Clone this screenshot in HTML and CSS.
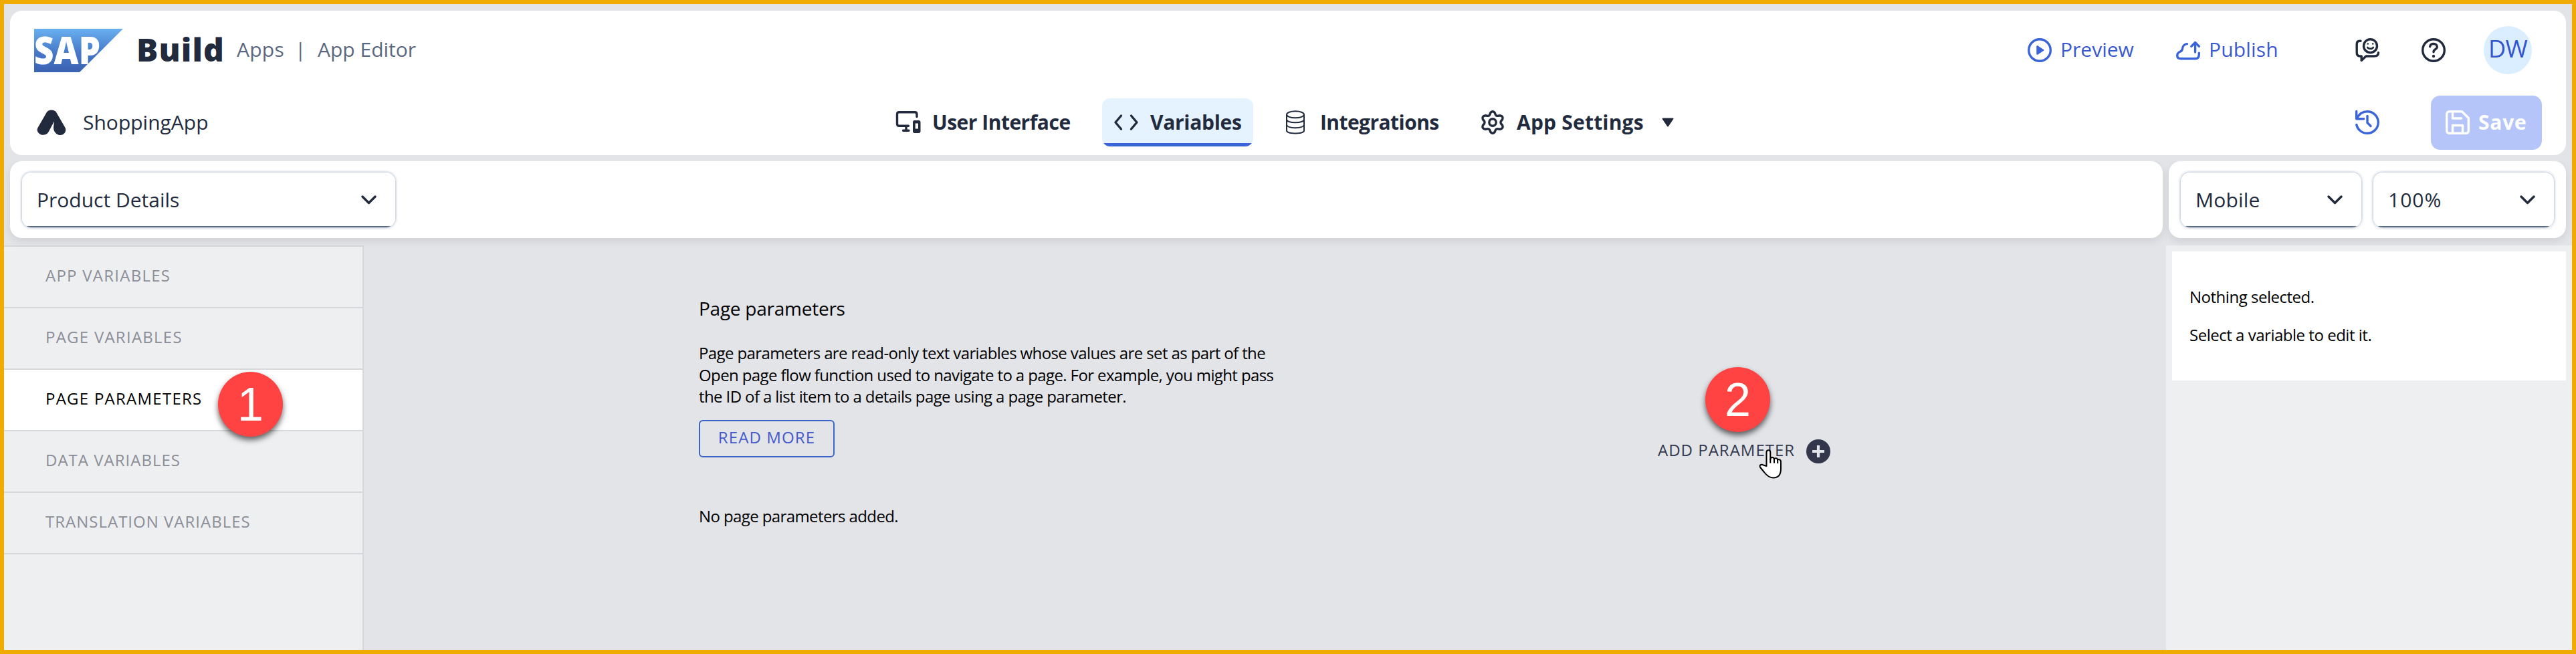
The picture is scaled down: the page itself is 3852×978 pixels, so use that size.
FILE: index.html
```html
<!DOCTYPE html>
<html lang="en">
<head>
<meta charset="utf-8">
<title>App Editor</title>
<link rel="stylesheet" href="styles.css">
</head>
<body>
<div class="app">
  <header class="header">
    <div class="header-row">
      <svg class="logo" width="133" height="65" viewBox="0 0 133 65">
        <defs><linearGradient id="sap" x1="0" y1="0" x2="0" y2="1"><stop offset="0" stop-color="#69b0f0"/><stop offset=".55" stop-color="#4679c8"/><stop offset="1" stop-color="#3d62b2"/></linearGradient></defs>
        <path d="M0 0h133L68 65H0z" fill="url(#sap)"/>
        <text class="logo-text" x="0" y="53" textLength="99" lengthAdjust="spacingAndGlyphs">SAP</text>
      </svg>
      <span class="build">Build</span>
      <span class="crumb crumb-apps">Apps</span>
      <span class="crumb crumb-sep">|</span>
      <span class="crumb crumb-editor">App Editor</span>
      <div class="actions">
        <svg width="36" height="36" viewBox="0 0 36 36" class="blue"><circle cx="18" cy="18" r="16.3" class="ln"/><path d="M14.5 12.4v11.2l8.6-5.6z" fill="currentColor" stroke="currentColor" stroke-width="2.5" stroke-linejoin="round"/></svg>
        <span class="action preview">Preview</span>
        <svg width="36" height="36" viewBox="0 0 36 36" class="blue"><path class="ln" d="M16.5 8.6C13 9 9.8 11.500 9.400 16c-.3 3-1.400 3.300-3.400 4.300C3.500 21.500 1.700 23 1.700 26c0 3.500 2.500 4.800 5.500 4.800H29c3.500 0 5.300-2 5.300-6.500v-2M28.600 21V7.500M22.800 12.400 28.600 6.500l5.800 5.900"/></svg>
        <span class="action publish">Publish</span>
        <svg class="feedback" width="36" height="36" viewBox="0 0 36 36"><path class="ln" d="M8 4.300H6.500C3.500 4.300 2.200 6 2.200 9v12.500c0 4 1.500 5.500 4.800 5.500h2.200v6.500L16 27h12.500c4 0 6-1.300 6-5.300"/><circle cx="22.500" cy="11.700" r="10" class="ln"/><circle cx="18.800" cy="8.500" r="1.300" fill="currentColor"/><circle cx="26.200" cy="8.500" r="1.300" fill="currentColor"/><path class="ln smile" d="M18.200 13.800c1.500 2.800 7.200 2.800 8.600 0"/></svg>
        <svg class="help" width="36" height="36" viewBox="0 0 36 36"><circle cx="18" cy="18" r="16.300" class="ln"/><path class="ln" d="M12.700 12.800c.2-6 10.600-5.600 10.600.2 0 4.300-5.300 3.300-5.300 7.700"/><circle cx="18" cy="27" r="2.200" fill="currentColor"/></svg>
        <div class="avatar"><span>DW</span></div>
      </div>
    </div>
    <div class="header-row row-nav">
      <svg class="app-mark" width="44" height="38" viewBox="0 0 44 38"><path d="M14.500 4.500C17-1 27-1 29.500 4.500L42.500 27c3 6-3 12-8.500 11-5.500-1-9-6-9-11l1-9.500-8.500 16c-3 5-10 5.500-13.500 2.500C.5 33 0 30 1.500 27z" fill="currentColor"/></svg>
      <span class="app-name">ShoppingApp</span>
      <nav class="tabs">
        <div class="tab tab-ui">
          <svg width="36" height="36" viewBox="0 0 36 36"><path class="ln" d="M31 9.500V6c0-2-1-3.300-3-3.300H4.500c-2 0-3 1.300-3 3.300v14c0 2 1 3.300 3 3.300H18.500M15 24v6M10.500 30.300h8.500"/><path d="M27.500 15h6.500c1.500 0 2.500 1 2.500 2.500v14c0 1.500-1 2.500-2.500 2.500h-6.500c-1.500 0-2.500-1-2.500-2.500v-14c0-1.500 1-2.500 2.500-2.500zm1.200 4.500v8h4.300v-8z" fill="currentColor" fill-rule="evenodd"/></svg>
          <span>User Interface</span>
        </div>
        <div class="tab tab-var tab-on">
          <svg width="36" height="36" viewBox="0 0 36 36"><path class="ln" d="M10.500 8 2 18l8.500 10M25.500 8 34 18l-8.500 10"/></svg>
          <span>Variables</span>
        </div>
        <div class="tab tab-int">
          <svg width="36" height="36" viewBox="0 0 36 36"><g fill="none" stroke="currentColor" stroke-width="2"><ellipse cx="17" cy="6.300" rx="13" ry="5"/><path d="M4 6.300v24c0 5.500 26 5.500 26 0v-24M4 14.200c2 5.500 24 5.500 26 0M4 22c2 5.500 24 5.500 26 0"/></g></svg>
          <span>Integrations</span>
        </div>
        <div class="tab tab-set">
          <svg width="36" height="36" viewBox="-18 -18 36 36"><path class="ln" d="M-3.100-14.500Q0-18 3.100-14.500L4.500-11.100Q5.800-9.300 7.900-9.700L11.500-10.200Q16.300-9 14.700-4.600L12.300-1.600Q11.600 0 12.300 1.600L14.700 4.600Q16.300 9 11.500 10.200L7.900 9.700Q5.800 9.300 4.500 11.100L3.100 14.500Q0 18-3.100 14.500L-4.500 11.100Q-5.800 9.300-7.900 9.700L-11.500 10.200Q-16.300 9-14.700 4.600L-12.300 1.600Q-11.600 0-12.300-1.600L-14.700-4.600Q-16.300-9-11.500-10.200L-7.900-9.700Q-5.800-9.300-4.500-11.100Z"/><circle r="5.200" class="ln"/></svg>
          <span>App Settings</span>
          <svg class="tri" width="18" height="14" viewBox="0 0 18 14"><path d="M1.500 1.500h15L9 12.500z" fill="currentColor" stroke="currentColor" stroke-width="2" stroke-linejoin="round"/></svg>
        </div>
      </nav>
      <div class="save-zone">
        <svg class="blue" width="36" height="36" viewBox="0 0 36 36"><path class="ln" d="M1.700 1.500v11.200h11M2.500 12C5.500 5.500 11 1.700 18 1.700c9 0 16.300 7.300 16.300 16.300S27 34.300 18 34.300C10 34.300 3.500 29 1.800 21.500M18 8.500v10l5 5"/></svg>
        <button class="save"><svg width="36" height="36" viewBox="0 0 36 36"><path class="ln" d="M6 1.700h18.500l9.800 9.800V30c0 2.800-1.500 4.300-4.300 4.300H6c-2.800 0-4.300-1.500-4.300-4.300V6c0-2.800 1.500-4.300 4.300-4.300zM10.500 2v10h13M10.500 34V22.500h15V34"/></svg><span>Save</span></button>
      </div>
    </div>
  </header>

  <div class="toolbars">
    <div class="toolbar toolbar-main">
      <div class="select select-page"><span>Product Details</span><svg width="23" height="14" viewBox="0 0 23 14"><path d="M2 2l9.500 9.500L21 2"/></svg></div>
    </div>
    <div class="toolbar toolbar-side">
      <div class="select"><span>Mobile</span><svg width="23" height="14" viewBox="0 0 23 14"><path d="M2 2l9.500 9.500L21 2"/></svg></div>
      <div class="select select-zoom"><span>100%</span><svg width="23" height="14" viewBox="0 0 23 14"><path d="M2 2l9.500 9.500L21 2"/></svg></div>
    </div>
  </div>

  <div class="body">
    <aside class="sidebar">
      <div class="item"><span>APP VARIABLES</span></div>
      <div class="item"><span>PAGE VARIABLES</span></div>
      <div class="item item-on"><span>PAGE PARAMETERS</span><b class="badge badge-1">1</b></div>
      <div class="item item-tight"><span>DATA VARIABLES</span></div>
      <div class="item item-tight"><span>TRANSLATION VARIABLES</span></div>
    </aside>
    <main class="main">
      <div class="info">
        <h1 class="title">Page parameters</h1>
        <p class="text">Page parameters are read-only text variables whose values are set as part of the<br>Open page flow function used to navigate to a page. For example, you might pass<br>the ID of a list item to a details page using a page parameter.</p>
        <button class="more"><span>READ MORE</span></button>
        <p class="empty">No page parameters added.</p>
      </div>
      <div class="add">
        <span class="add-label">ADD PARAMETER</span>
        <svg width="36" height="36" viewBox="0 0 36 36"><circle cx="18" cy="18" r="18" fill="#32374b"/><path d="M18 9v18M9 18h18" stroke="#e3e4e8" stroke-width="4.200"/></svg>
        <b class="badge badge-2">2</b>
        <svg class="cursor" width="36" height="46" viewBox="0 0 36 46"><path d="M11.500 25V4.200a2.900 2.900 0 0 1 5.800 0V15q0-3 2.700-3t3 3q0-2 2.600-1.800t2.600 3q0-1.500 2.400-1t2.400 3.500V29c0 9-4 13.500-11.500 13.500C15 42.500 11 38 8 34L2.300 27c-2.300-3 1.200-5.500 4.500-3.500z" fill="#fff" stroke="#000" stroke-width="2" stroke-linejoin="round"/><path d="M17.300 14v6.500M23 14.500v6M28.200 16v5" stroke="#000" stroke-width="2"/></svg>
      </div>
    </main>
    <aside class="panel">
      <div class="card"><p class="card-line">Nothing selected.</p><p class="card-line">Select a variable to edit it.</p></div>
    </aside>
  </div>
</div>
</body>
</html>
```
FILE: styles.css
```css
* { box-sizing: border-box; }
body { margin: 0; font-family: "Open Sans", "Noto Sans", sans-serif; color: #222b3d; }
h1, p { margin: 0; font-weight: 400; white-space: nowrap; }
button { font: inherit; letter-spacing: inherit; }
span, b { white-space: nowrap; }
svg { flex: none; display: block; overflow: visible; }
.app { height: 978px; border: 6px solid #f0ab00; background: #e3e4e8; padding-top: 10px; display: flex; flex-direction: column; overflow: hidden; }
.ln { fill: none; stroke: currentColor; stroke-width: 3.4; stroke-linecap: round; stroke-linejoin: round; }
.smile { stroke-width: 2.6; }
.blue { color: #3b64d9; }

.header { margin: 0 9px; height: 216px; border-radius: 18px; background: #fff; flex: none; }
.header-row { height: 118px; padding-left: 36px; display: flex; align-items: center; }
.row-nav { height: 98px; padding-left: 40px; }
.logo-text { font: 800 57px "Open Sans", sans-serif; fill: #fff; }
.build { margin: -3px 0 0 20px; width: 150px; font-size: 48px; font-weight: 800; letter-spacing: 1.1px; }
.crumb { margin-top: -3px; font-size: 30px; color: #5b6880; }
.crumb-apps { width: 87px; letter-spacing: .25px; }
.crumb-sep { width: 34px; }
.actions { margin-left: auto; padding-right: 51px; display: flex; align-items: center; }
.action { font-size: 30px; color: #3b59cf; margin: -3px 0 0 13px; }
.preview { width: 173px; }
.publish { width: 219px; letter-spacing: .15px; }
.help { margin: 0 57px 0 63px; }
.avatar { width: 72px; height: 72px; border-radius: 50%; background: #dbeeff; color: #3457cf; font-size: 36px; letter-spacing: -.7px; display: flex; align-items: center; justify-content: center; padding-bottom: 5px; }
.app-name { margin: -2px 0 0 25px; width: 1198px; font-size: 30px; }

.tabs { display: flex; gap: 28px; }
.tab { height: 72px; padding: 0 14px 0 18px; display: flex; align-items: center; gap: 18px; border-radius: 12px; font-size: 30px; font-weight: 700; }
.tab span { margin-top: -2px; }
.tab-ui { width: 298px; letter-spacing: -.5px; }
.tab-var { width: 226px; letter-spacing: -.3px; }
.tab-int { width: 266px; letter-spacing: -.57px; }
.tab-set { letter-spacing: .2px; }
.tri { margin-left: 9px; }
.tab-on { background: linear-gradient(#e5f2ff 67px, #3b64d9 67px); }
.save-zone { margin-left: auto; padding-right: 36px; display: flex; align-items: center; gap: 77px; }
.save { width: 166px; height: 81px; padding: 0 0 0 22px; border: 0; border-radius: 14px; background: #b5c5f9; color: #fff; font-size: 30px; font-weight: 700; letter-spacing: .8px; display: flex; align-items: center; gap: 13px; }
.save span { margin-top: -2px; }

.toolbars { margin: 9px 9px 0; height: 115px; display: flex; gap: 9px; flex: none; }
.toolbar { border-radius: 18px; background: #fff; box-shadow: 0 5px 12px rgba(60,60,60,.11); clip-path: inset(0 -20px -20px -20px); padding: 17px 18px 0; display: flex; gap: 18px; }
.toolbar-main { flex: 1; }
.toolbar-side { width: 594px; }
.select { flex: 1; height: 82px; border-radius: 14px; background: linear-gradient(#fff 80px, #5b6b82 80px); box-shadow: 0 0 4px rgba(85,107,145,.65); display: flex; align-items: center; justify-content: space-between; padding: 0 28px 1px 22px; font-size: 30px; letter-spacing: .2px; }
.select-page { flex: none; width: 558px; letter-spacing: 0; }
.select-zoom { letter-spacing: 1px; }
.select path { fill: none; stroke: #222b3d; stroke-width: 3.5; stroke-linecap: round; stroke-linejoin: round; }

.body { margin-top: 11px; flex: 1; display: flex; }
.sidebar { width: 538px; background: #eeeff1; border: solid #d6d8db; border-width: 2px 2px 0 0; font-size: 24px; color: #8b8e97; }
.item { position: relative; height: 92px; border-bottom: 2px solid #d6d8db; padding: 0 0 5px 62px; display: flex; align-items: center; letter-spacing: 1.25px; }
.item-tight { letter-spacing: 1px; }
.item-on { background: #fff; color: #000; }
.badge { position: absolute; width: 97px; height: 97px; border-radius: 50%; background: #ff4343; color: #fff; font: 400 70px/99px "Liberation Sans", sans-serif; letter-spacing: 0; text-align: center; box-shadow: 0 5px 8px rgba(0,0,0,.6); }
.badge-1 { left: 320px; top: 3px; z-index: 1; }

.main { flex: 1; padding: 74px 0 0 501px; display: flex; color: #000; }
.info { width: 1434px; font-size: 24px; }
.title { font-size: 28px; line-height: 40px; letter-spacing: -.25px; }
.text { margin-top: 31px; line-height: 32.5px; letter-spacing: -.61px; }
.more { display: block; margin-top: 18px; width: 203px; height: 56px; border: 2px solid #3b64c9; border-radius: 6px; background: none; color: #4359cb; padding: 0 0 5px; letter-spacing: 1.1px; }
.empty { margin-top: 72px; line-height: 32px; letter-spacing: -.6px; }
.add { position: relative; width: 258px; height: 36px; margin-top: 216px; display: flex; align-items: center; justify-content: space-between; font-size: 24px; letter-spacing: 1px; color: #32394e; }
.add-label { margin-top: -5px; }
.badge-2 { left: 71px; top: -108px; }
.cursor { position: absolute; left: 151px; top: 15px; }

.panel { width: 607px; background: #eeeff1; padding: 9px 9px 0; color: #000; font-size: 24px; letter-spacing: -.48px; }
.card { height: 193px; background: #fff; padding: 51px 26px 0; }
.card-line { line-height: 33px; margin-bottom: 24px; }
```
